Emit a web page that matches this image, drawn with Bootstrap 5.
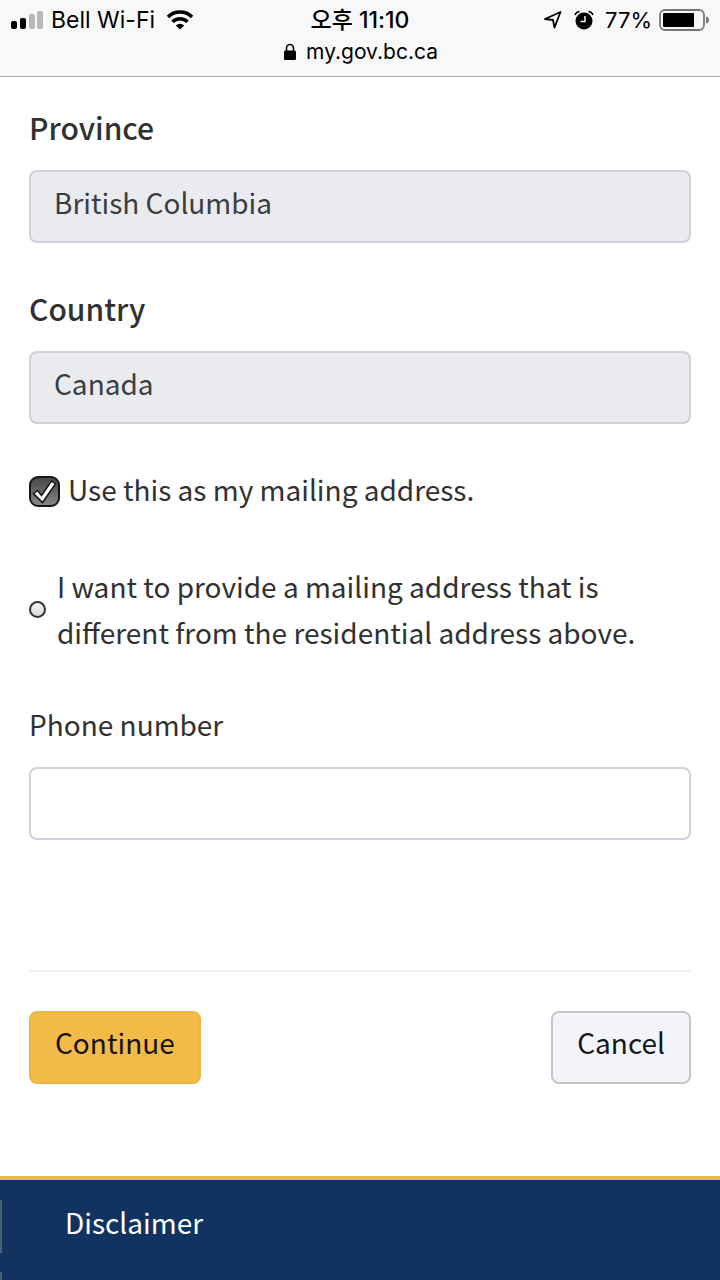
<!DOCTYPE html>
<html lang="en">
<head>
<meta charset="utf-8">
<meta name="viewport" content="width=device-width, initial-scale=1">
<title>my.gov.bc.ca</title>
<link href="https://cdn.jsdelivr.net/npm/bootstrap@5.3.0/dist/css/bootstrap.min.css" rel="stylesheet">
<script src="https://cdn.jsdelivr.net/npm/bootstrap@5.3.0/dist/js/bootstrap.bundle.min.js" defer></script>
<style>
  body { font-family: "Noto Sans CJK KR", "Noto Sans", sans-serif; font-size: 28px; line-height: 46px; color: #313132; background: #fff; }
  .browser-bar { font-family: Inter, "Noto Sans CJK KR", sans-serif; font-size: 22px; line-height: 32px; color: #000; background: #f8f8f8; border-bottom: 1px solid #a9a9a9; padding: 4px 10px 8px; }
  .status-row > div { flex: 1 1 0; }
  .carrier, .clock { font-size: 23px; }
  .clock { font-weight: 500; }
  .status-icons { gap: 6px; }
  .address { font-size: 21px; line-height: 31px; padding-bottom: 1px; }
  .page-main { padding: 27px 29px 92px; }
  .field-label { display: block; margin-bottom: 20px; }
  .field-label.strong-label { font-size: 30px; font-weight: 500; }
  .form-control.field { height: 73px; font-size: inherit; line-height: 46px; color: #3c3d42; padding: 7px 23px 16px; border: 2px solid #ced0da; border-radius: 8px; background: #fff; }
  .form-control.field:disabled { background: #e9ebef; opacity: 1; }
  .field-group { margin-bottom: 42px; }
  .choice input { appearance: none; flex: none; margin: 0; }
  .choice-first { margin-bottom: 47px; }
  .choice-first label { padding-bottom: 4px; }
  .tick { width: 31px; height: 31px; border: 2px solid #161616; border-radius: 9px; background: linear-gradient(#484848, #858585); }
  .tick-box { position: relative; display: flex; }
  .tick-box svg { position: absolute; inset: 0; pointer-events: none; display: none; }
  .tick:checked + svg { display: block; }
  .dot { width: 17px; height: 17px; border: 2px solid #333; border-radius: 50%; background: linear-gradient(#f4f4f4, #dadada); }
  .dot:checked { background: #333; }
  .choice-other { gap: 11px; }
  .phone-group { margin-top: 46px; }
  .rule { margin: 130px 0 39px; border-top: 2px solid #eee; opacity: 1; }
  .btn.action { font-size: inherit; line-height: 46px; height: 73px; padding: 6px 24px 17px; border-width: 2px; border-radius: 8px; }
  .btn-continue, .btn-continue:hover { color: #161308; background: #f2bb48; border-color: #eeb542; }
  .btn-cancel, .btn-cancel:hover { color: #15171c; background: #f2f4f9; border-color: #c5c6ca; }
  .site-footer { background: #12325f; border-top: 4px solid #e6bc4b; padding-top: 20px; }
  .site-footer li { border-left: 2px solid #4b6079; padding: 0 63px; }
  .site-footer li + li { margin-top: 19px; height: 8px; }
  .site-footer a { display: block; color: #fff; text-decoration: none; line-height: 44px; padding-bottom: 9px; }
</style>
</head>
<body>
<header class="browser-bar">
  <div class="status-row d-flex align-items-center">
    <div class="carrier d-flex align-items-center">
      <svg width="33" height="20" viewBox="0 0 33 20" aria-hidden="true"><rect x="1" y="11" width="6" height="8" rx="2"/><rect x="10" y="8" width="6" height="11" rx="2"/><rect x="19" y="4" width="6" height="15" rx="2" fill="#b8b8b8"/><rect x="27" y="1" width="6" height="18" rx="2" fill="#b8b8b8"/></svg>
      <span class="ms-2">Bell Wi-Fi</span>
      <svg class="ms-2" width="34" height="22" viewBox="0 0 34 22" aria-hidden="true"><g fill="none" stroke="#000" stroke-width="3.600"><path d="M5 8a17 17 0 0 1 24 0"/><path d="M9.500 12.800a10.600 10.600 0 0 1 15 0"/></g><path d="M17 20.500l-4.200-4a6 6 0 0 1 8.400 0z"/></svg>
    </div>
    <div class="clock text-center">오후 11:10</div>
    <div class="status-icons d-flex align-items-center justify-content-end">
      <svg width="20" height="20" viewBox="0 0 20 20" fill="none" stroke="#000" stroke-width="1.800" stroke-linejoin="round" aria-hidden="true"><path d="M17.500 2 11.500 17.500l-1.500-7.500L2 9z"/></svg>
      <svg class="ms-1" width="22" height="20" viewBox="0 0 22 20" aria-hidden="true"><circle cx="11" cy="11" r="8.500"/><path d="M2 5Q3 2 6.500 1.500M20 5Q19 2 15.500 1.500" fill="none" stroke="#000" stroke-width="1.600"/><path d="M12 6v5.500H7.500" fill="none" stroke="#f8f8f8" stroke-width="1.500"/></svg>
      <span class="ms-1">77%</span>
      <svg width="52" height="24" viewBox="0 0 52 24" aria-hidden="true"><rect x="2" y="2" width="44" height="20" rx="5" fill="none" stroke="#777" stroke-width="1.800"/><rect x="5" y="5" width="31" height="14" rx="1"/><path d="M48 8.500q3 1 3 3.500t-3 3.500z" fill="#777"/></svg>
    </div>
  </div>
  <div class="address d-flex align-items-center justify-content-center">
    <svg class="me-2" width="16" height="18" viewBox="0 0 16 18" aria-hidden="true"><rect x="2" y="7.500" width="12" height="9.500" rx="1.500"/><path d="M4.500 8V5a3.500 3.500 0 0 1 7 0v3" fill="none" stroke="#000" stroke-width="1.600"/></svg>
    <span>my.gov.bc.ca</span>
  </div>
</header>

<main class="page-main">
  <form>
    <div class="field-group">
      <label class="field-label strong-label" for="province">Province</label>
      <input class="form-control field" id="province" type="text" value="British Columbia" disabled>
    </div>
    <div class="field-group">
      <label class="field-label strong-label" for="country">Country</label>
      <input class="form-control field" id="country" type="text" value="Canada" disabled>
    </div>
    <div class="choice choice-first d-flex align-items-center">
      <span class="tick-box me-2"><input class="tick" id="same" type="checkbox" checked><svg width="31" height="31" viewBox="0 0 31 31" aria-hidden="true"><path d="M4.500 17.500l4-3 4 5L22.500 5l4 3L13.500 26.500z" fill="#fff" stroke="#111" stroke-width="1.500"/></svg></span>
      <label for="same">Use this as my mailing address.</label>
    </div>
    <div class="choice choice-other d-flex align-items-center">
      <input class="dot" id="other" type="radio" name="mailing">
      <label for="other">I want to provide a mailing address that is different from the residential address above.</label>
    </div>
    <div class="phone-group">
      <label class="field-label" for="phone">Phone number</label>
      <input class="form-control field" id="phone" type="tel">
    </div>
    <hr class="rule">
    <div class="d-flex justify-content-between">
      <button class="btn action btn-continue" type="submit">Continue</button>
      <button class="btn action btn-cancel" type="button">Cancel</button>
    </div>
  </form>
</main>

<footer class="site-footer">
  <ul class="list-unstyled m-0">
    <li><a href="#disclaimer">Disclaimer</a></li>
    <li></li>
  </ul>
</footer>
</body>
</html>
